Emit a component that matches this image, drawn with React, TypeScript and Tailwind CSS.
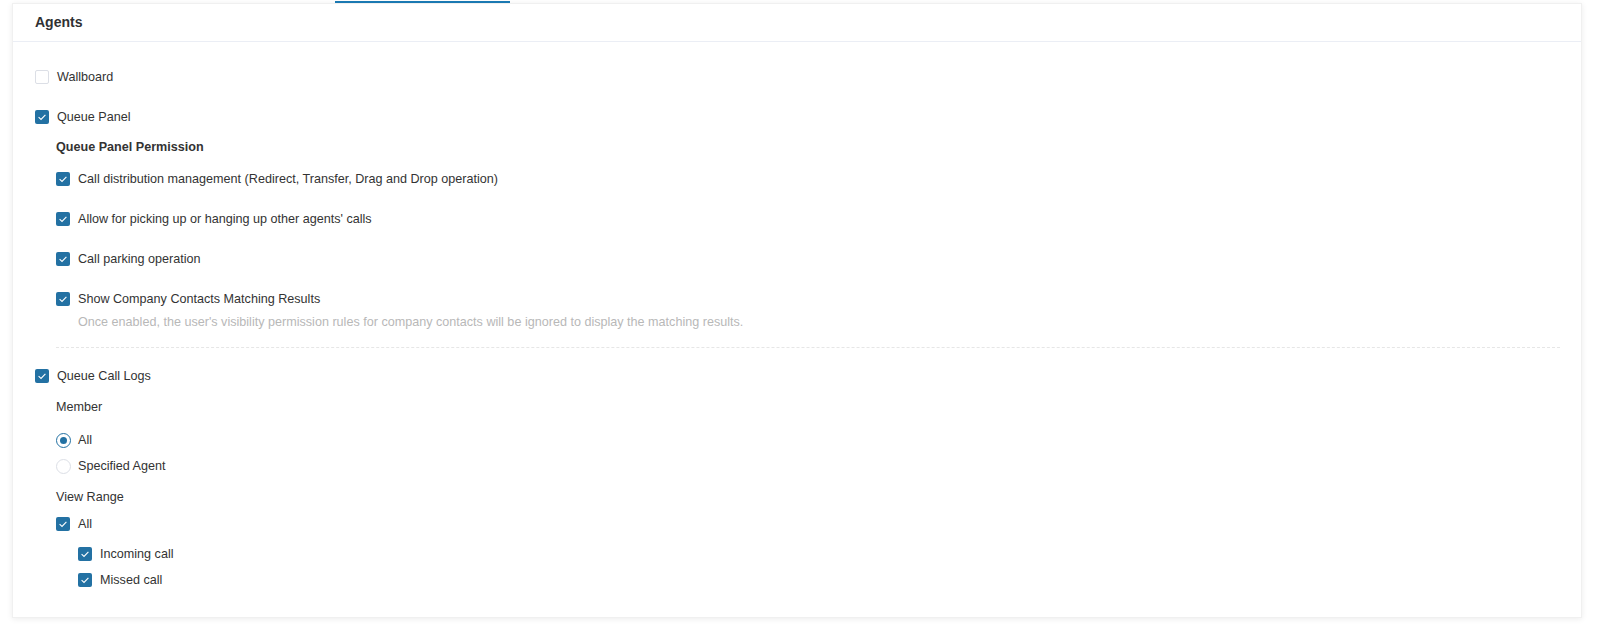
import React from "react";

const BLUE = "bg-[#2371a3]";

function Check({ checked }: { checked: boolean }) {
  if (!checked) {
    return (
      <span className="w-[14px] h-[14px] rounded-[2px] border border-[#dcdfe6] bg-white shrink-0" />
    );
  }
  return (
    <span
      className={`w-[14px] h-[14px] rounded-[2px] ${BLUE} shrink-0 flex items-center justify-center`}
    >
      <svg width="14" height="14" viewBox="0 0 14 14">
        <polyline
          points="3.6,7.2 6,9.4 10.4,4.8"
          fill="none"
          stroke="#ffffff"
          strokeWidth="1.1"
        />
      </svg>
    </span>
  );
}

function Radio({ checked }: { checked: boolean }) {
  return (
    <span
      className={`w-[15px] h-[15px] rounded-full border shrink-0 flex items-center justify-center bg-white ${
        checked ? "border-[#2371a3]" : "border-[#dcdfe6]"
      }`}
    >
      {checked && <span className={`w-[7px] h-[7px] rounded-full ${BLUE}`} />}
    </span>
  );
}

function CheckRow({
  label,
  checked = true,
  className = "",
}: {
  label: string;
  checked?: boolean;
  className?: string;
}) {
  return (
    <div className={`h-[20px] flex items-center gap-[8px] ${className}`}>
      <Check checked={checked} />
      <span>{label}</span>
    </div>
  );
}

function RadioRow({
  label,
  checked,
  className = "",
}: {
  label: string;
  checked: boolean;
  className?: string;
}) {
  return (
    <div className={`h-[20px] flex items-center gap-[7px] ${className}`}>
      <Radio checked={checked} />
      <span>{label}</span>
    </div>
  );
}

export default function App() {
  return (
    <div
      className="min-h-[628px] bg-white text-[12.6px] text-[#333333]"
      style={{ fontFamily: "'Liberation Sans', Arial, sans-serif" }}
    >
      {/* active tab underline from the tab bar above */}
      <div className="h-[3px] pl-[335px] pt-[1px]">
        <div className="w-[175px] h-[1.5px] bg-[#1b7bb6]" />
      </div>

      <div className="ml-[12px] w-[1570px] bg-white shadow-[0_1px_6px_rgba(0,0,0,0.08)] border border-[#f0f0f0]">
        {/* header */}
        <div className="h-[38px] flex items-center pl-[22px] border-b border-[#ebeef5]">
          <span className="text-[14px] font-bold text-[#303133]">Agents</span>
        </div>

        {/* body */}
        <div className="pl-[22px] pr-[21px] pt-[25px] pb-[27px]">
          <CheckRow label="Wallboard" checked={false} />
          <CheckRow label="Queue Panel" className="mt-[20px]" />

          <div className="pl-[21px]">
            <div className="h-[20px] mt-[10px] flex items-center font-bold">
              Queue Panel Permission
            </div>
            <CheckRow
              label="Call distribution management (Redirect, Transfer, Drag and Drop operation)"
              className="mt-[12px]"
            />
            <CheckRow
              label="Allow for picking up or hanging up other agents' calls"
              className="mt-[20px]"
            />
            <CheckRow label="Call parking operation" className="mt-[20px]" />
            <CheckRow
              label="Show Company Contacts Matching Results"
              className="mt-[20px]"
            />
            <div className="h-[20px] mt-[3px] pl-[22px] flex items-center text-[#b8b8b8]">
              Once enabled, the user's visibility permission rules for company
              contacts will be ignored to display the matching results.
            </div>
            <div className="mt-[15px] border-t border-dashed border-[#e6e6e6]" />
          </div>

          <CheckRow label="Queue Call Logs" className="mt-[18px]" />

          <div className="pl-[21px]">
            <div className="h-[20px] mt-[11px] flex items-center">Member</div>
            <RadioRow label="All" checked className="mt-[13px]" />
            <RadioRow label="Specified Agent" checked={false} className="mt-[6px]" />

            <div className="h-[20px] mt-[11px] flex items-center">View Range</div>
            <CheckRow label="All" className="mt-[7px]" />
            <div className="pl-[22px]">
              <CheckRow label="Incoming call" className="mt-[10px]" />
              <CheckRow label="Missed call" className="mt-[6px]" />
            </div>
          </div>
        </div>
      </div>
    </div>
  );
}
